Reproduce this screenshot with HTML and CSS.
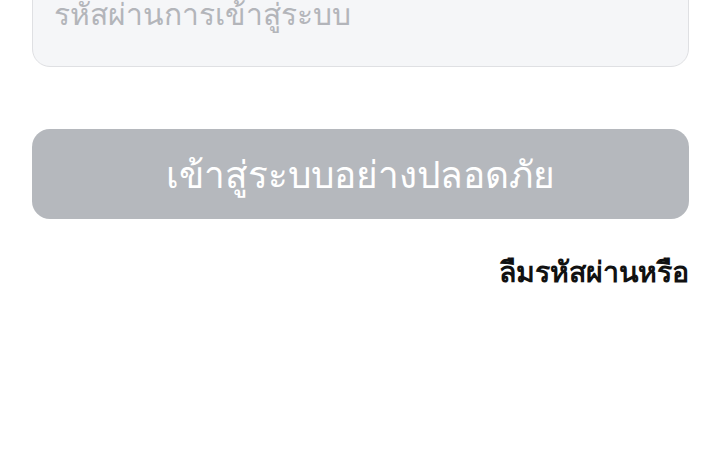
FILE: index.html
```html
<!DOCTYPE html>
<html lang="th">
<head>
<meta charset="utf-8">
<link rel="stylesheet" href="styles.css">
</head>
<body>
<div class="page">
  <div class="field">
    <input class="input" type="password" placeholder="รหัสผ่านการเข้าสู่ระบบ">
  </div>
  <button class="btn" type="button">เข้าสู่ระบบอย่างปลอดภัย</button>
  <div class="links">
    <a class="forgot" href="#">ลืมรหัสผ่านหรือ</a>
  </div>
</div>
</body>
</html>
```
FILE: styles.css
```css
* { box-sizing: border-box; }
html, body { margin: 0; padding: 0; background: #ffffff; }
body {
  font-family: "Noto Sans", "DejaVu Sans", sans-serif;
  width: 720px;
  height: 450px;
  overflow: hidden;
}
.page {
  padding: 0 31px 0 32px;
  margin-top: -40px;
  display: flex;
  flex-direction: column;
}
.field { display: flex; }
.input {
  width: 100%;
  height: 107px;
  border: 1px solid #dfe0e3;
  border-radius: 18px;
  background: #f5f6f8;
  padding: 0 20px 0 21px;
  font-family: inherit;
  font-size: 30px;
  font-weight: 400;
  color: #333;
  outline: none;
}
.input::placeholder { color: #b3b5ba; }
.btn {
  margin-top: 62px;
  height: 90px;
  border: none;
  border-radius: 18px;
  background: #b5b8bd;
  color: #ffffff;
  font-family: inherit;
  font-size: 37px;
  font-weight: 400;
  cursor: pointer;
}
.links {
  display: flex;
  justify-content: flex-end;
  margin-top: 30px;
}
.forgot {
  color: #111111;
  font-size: 28.5px;
  font-weight: 700;
  text-decoration: none;
}
```
